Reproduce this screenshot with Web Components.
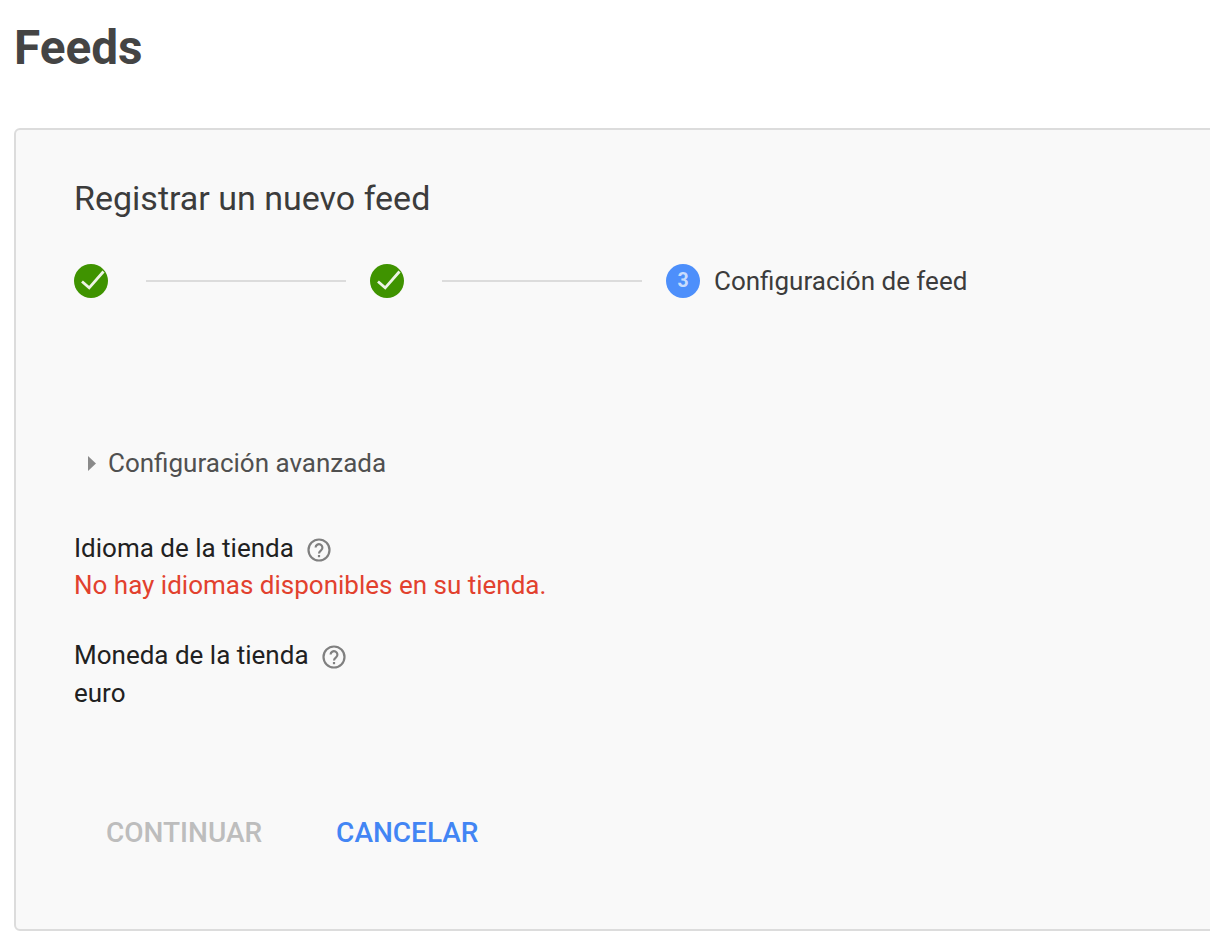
<!DOCTYPE html>
<html lang="es">
<head>
<meta charset="utf-8">
<title>Feeds</title>
<style>
    html, body { margin: 0; padding: 0; background: #fff; overflow: hidden; }
    body { font-family: Roboto, "Liberation Sans", sans-serif; width: 1210px; height: 932px; }
</style>
</head>
<body>
<feed-page>
    <feed-wizard heading="Registrar un nuevo feed">
        <wizard-steps slot="steps">
            <step-done></step-done>
            <step-line></step-line>
            <step-done></step-done>
            <step-line></step-line>
            <step-current number="3">Configuración de feed</step-current>
        </wizard-steps>
        <advanced-toggle>Configuración avanzada</advanced-toggle>
        <feed-field label="Idioma de la tienda" class="lang" tone="error">No hay idiomas disponibles en su tienda.</feed-field>
        <feed-field label="Moneda de la tienda" class="currency">euro</feed-field>
        <wizard-actions slot="actions"></wizard-actions>
    </feed-wizard>
</feed-page>

<script>
class FeedPage extends HTMLElement {
    constructor() {
        super();
        this.attachShadow({ mode: 'open' });
        this.shadowRoot.innerHTML = `
            <style>
                :host {
                    display: block;
                    padding: 19px 0 0 14px;
                }
                h1 {
                    margin: 0 0 50px 0;
                    font-size: 47.7px;
                    line-height: 59px;
                    font-weight: 700;
                    color: #444;
                }
            </style>
            <h1>Feeds</h1>
            <slot></slot>
        `;
    }
}

class FeedWizard extends HTMLElement {
    constructor() {
        super();
        this.attachShadow({ mode: 'open' });
        this.shadowRoot.innerHTML = `
            <style>
                :host {
                    display: block;
                    box-sizing: border-box;
                    width: 1230px;
                    height: 803px;
                    padding: 48px 0 0 58px;
                    background: #f9f9f9;
                    border: 2px solid #dcdcdc;
                    border-radius: 6px;
                }
                h2 {
                    margin: 0 0 46px;
                    font-size: 34px;
                    line-height: 40px;
                    font-weight: 400;
                    color: #3c3c3c;
                }
            </style>
            <h2>${this.getAttribute('heading')}</h2>
            <slot name="steps"></slot>
            <slot></slot>
            <slot name="actions"></slot>
        `;
    }
}

class WizardSteps extends HTMLElement {
    constructor() {
        super();
        this.attachShadow({ mode: 'open' });
        this.shadowRoot.innerHTML = `
            <style>
                :host {
                    display: flex;
                    align-items: center;
                    height: 34px;
                    margin-bottom: 147px;
                }
            </style>
            <slot></slot>
        `;
    }
}

class StepDone extends HTMLElement {
    constructor() {
        super();
        this.attachShadow({ mode: 'open' });
        this.shadowRoot.innerHTML = `
            <style>
                :host { display: block; width: 34px; height: 34px; }
                svg { display: block; }
            </style>
            <svg width="34" height="34" viewBox="0 0 34 34">
                <circle cx="17" cy="17" r="17" fill="#3f9300"/>
                <path d="M8 17.5l7.2 6.3L29.5 7.5" fill="none" stroke="#eef4e6" stroke-width="2.8"/>
            </svg>
        `;
    }
}

class StepLine extends HTMLElement {
    constructor() {
        super();
        this.attachShadow({ mode: 'open' });
        this.shadowRoot.innerHTML = `
            <style>
                :host {
                    display: block;
                    width: 200px;
                    height: 2px;
                    margin: 0 24px 0 38px;
                    background: #dcdcdc;
                }
            </style>
        `;
    }
}

class StepCurrent extends HTMLElement {
    constructor() {
        super();
        this.attachShadow({ mode: 'open' });
        this.shadowRoot.innerHTML = `
            <style>
                :host {
                    display: flex;
                    align-items: center;
                    gap: 14px;
                    font-size: 26px;
                    color: #3c3c3c;
                }
                .num {
                    width: 34px;
                    height: 34px;
                    border-radius: 50%;
                    background: #4d8ffb;
                    color: #c9dcfc;
                    font-size: 19.5px;
                    font-weight: 700;
                    line-height: 34px;
                    text-align: center;
                }
            </style>
            <span class="num">${this.getAttribute('number')}</span>
            <slot></slot>
        `;
    }
}

class AdvancedToggle extends HTMLElement {
    constructor() {
        super();
        this.attachShadow({ mode: 'open' });
        this.shadowRoot.innerHTML = `
            <style>
                :host {
                    display: flex;
                    align-items: center;
                    gap: 12px;
                    height: 36px;
                    margin: 0 0 49px 14px;
                    font-size: 26px;
                    color: #505050;
                }
                svg { display: block; }
            </style>
            <svg width="8" height="15" viewBox="0 0 8 15"><path d="M0 0l8 7.5-8 7.5z" fill="#8a8a8a"/></svg>
            <slot></slot>
        `;
    }
}

class FeedField extends HTMLElement {
    constructor() {
        super();
        this.attachShadow({ mode: 'open' });
        this.shadowRoot.innerHTML = `
            <style>
                :host {
                    display: block;
                    margin-bottom: 33px;
                    font-size: 26px;
                    line-height: 37px;
                    color: #212121;
                }
                :host(.currency) .value { padding-top: 1px; }
                :host([tone="error"]) .value { color: #e2412e; }
                .label {
                    display: flex;
                    align-items: center;
                    gap: 13px;
                }
                svg { display: block; margin-top: 3px; }
            </style>
            <div class="label">
                <span>${this.getAttribute('label')}</span>
                <svg width="24" height="24" viewBox="0 0 24 24">
                    <circle cx="12" cy="12" r="10.5" fill="none" stroke="#808080" stroke-width="2.2"/>
                    <path d="M8.6 9.6a3.4 3.4 0 1 1 5.6 2.6c-1.3 1-2.2 1.6-2.2 3.2" fill="none" stroke="#808080" stroke-width="2.2"/>
                    <rect x="10.9" y="17" width="2.2" height="2.2" fill="#808080"/>
                </svg>
            </div>
            <div class="value"><slot></slot></div>
        `;
    }
}

class WizardActions extends HTMLElement {
    constructor() {
        super();
        this.attachShadow({ mode: 'open' });
        this.shadowRoot.innerHTML = `
            <style>
                :host {
                    display: flex;
                    gap: 74px;
                    margin: 103px 0 0 32px;
                    font-size: 28px;
                    line-height: 36px;
                    font-weight: 500;
                }
                .off { color: #bdbdbd; }
                .on { color: #4285f4; }
            </style>
            <span class="off">CONTINUAR</span>
            <span class="on">CANCELAR</span>
        `;
    }
}

customElements.define('feed-page', FeedPage);
customElements.define('feed-wizard', FeedWizard);
customElements.define('wizard-steps', WizardSteps);
customElements.define('step-done', StepDone);
customElements.define('step-line', StepLine);
customElements.define('step-current', StepCurrent);
customElements.define('advanced-toggle', AdvancedToggle);
customElements.define('feed-field', FeedField);
customElements.define('wizard-actions', WizardActions);
</script>
</body>
</html>
